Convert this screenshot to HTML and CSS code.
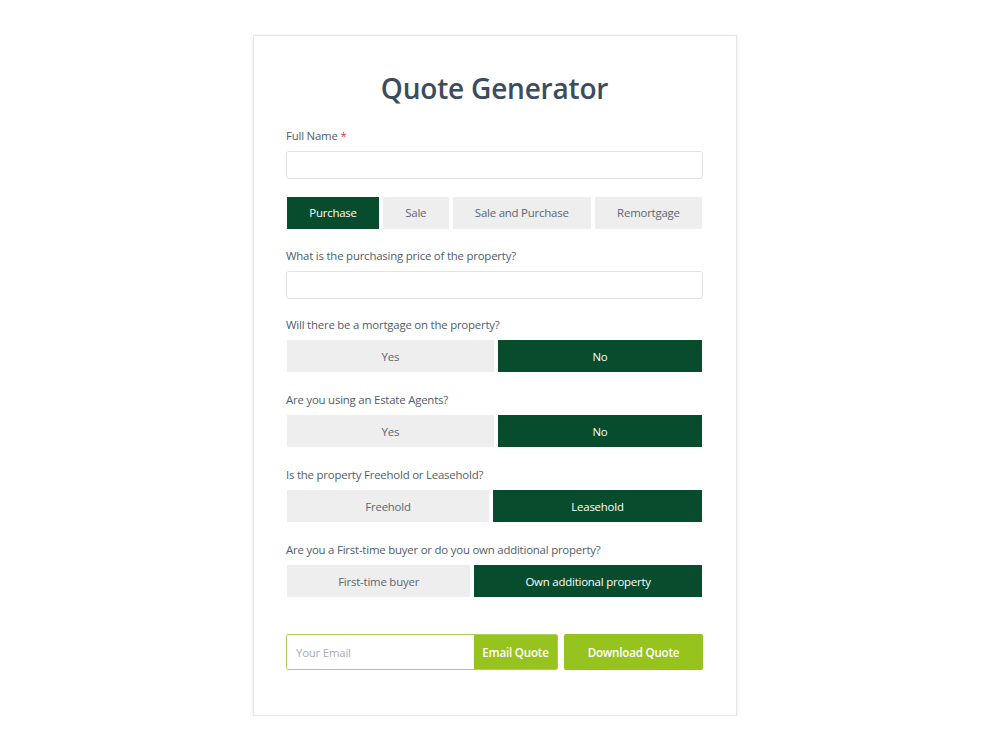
FILE: index.html
```html
<!DOCTYPE html>
<html lang="en">
<head>
<meta charset="utf-8">
<title>Quote Generator</title>
<link rel="stylesheet" href="styles.css">
</head>
<body>
<main class="card">
  <h1 class="title">Quote Generator</h1>

  <div class="field">
    <label class="label">Full Name <span class="req">*</span></label>
    <input class="input" type="text">
  </div>

  <div class="tabs">
    <button class="opt active">Purchase</button>
    <button class="opt">Sale</button>
    <button class="opt">Sale and Purchase</button>
    <button class="opt">Remortgage</button>
  </div>

  <div class="field">
    <label class="label">What is the purchasing price of the property?</label>
    <input class="input" type="text">
  </div>

  <div class="field field-choice">
    <label class="label">Will there be a mortgage on the property?</label>
    <div class="choice">
      <button class="opt">Yes</button>
      <button class="opt active">No</button>
    </div>
  </div>

  <div class="field field-choice">
    <label class="label">Are you using an Estate Agents?</label>
    <div class="choice">
      <button class="opt">Yes</button>
      <button class="opt active">No</button>
    </div>
  </div>

  <div class="field field-choice">
    <label class="label">Is the property Freehold or Leasehold?</label>
    <div class="choice">
      <button class="opt">Freehold</button>
      <button class="opt active">Leasehold</button>
    </div>
  </div>

  <div class="field field-choice">
    <label class="label">Are you a First-time buyer or do you own additional property?</label>
    <div class="choice">
      <button class="opt">First-time buyer</button>
      <button class="opt active">Own additional property</button>
    </div>
  </div>

  <div class="actions">
    <div class="email-group">
      <input class="email" type="email" placeholder="Your Email">
      <button class="email-btn">Email Quote</button>
    </div>
    <button class="download">Download Quote</button>
  </div>
</main>
</body>
</html>
```

FILE: styles.css
```css
* { box-sizing: border-box; }

body {
  margin: 0;
  padding-right: 10px;
  background: #ffffff;
  font-family: "Open Sans", "Noto Sans", sans-serif;
  color: #4f5d6b;
}

.card {
  width: 484px;
  margin: 35px auto 0;
  padding: 33px 33px 45px 32px;
  background: #fff;
  border: 1px solid #e6e6e6;
  box-shadow: 0 1px 4px rgba(0, 0, 0, 0.10);
}

.title {
  margin: 0 0 21px;
  text-align: center;
  font-size: 28px;
  letter-spacing: -0.2px;
  font-weight: 600;
  color: #3c4c5c;
  line-height: 38px;
}

.field { margin-bottom: 18px; }

.field-choice { margin-bottom: 20px; }

.label {
  display: block;
  font-size: 11.4px;
  letter-spacing: -0.2px;
  line-height: 16px;
  margin-bottom: 7px;
  color: #4f5d6b;
}

.req { color: #e53935; }

.input {
  display: block;
  width: 100%;
  height: 28px;
  border: 1px solid #e3e3e3;
  border-radius: 3px;
  background: #fff;
  font: inherit;
}

.tabs,
.choice {
  display: flex;
  gap: 4px;
  padding: 0 1px;
}

.tabs { margin-bottom: 19px; }

.tabs .opt { padding-top: 0; padding-bottom: 1px; }

.opt {
  flex: 1 1 auto;
  height: 32px;
  padding: 0 18px;
  border: none;
  background: #eeeeee;
  color: #5a6672;
  font: inherit;
  font-size: 11.4px;
  letter-spacing: -0.2px;
}

.opt.active {
  background: #064c2d;
  color: #ffffff;
}

.actions {
  display: flex;
  gap: 6px;
  margin-top: 37px;
}

.email-group {
  display: flex;
  width: 272px;
  height: 36px;
  border: 1px solid #a9d154;
  border-radius: 2px;
  overflow: hidden;
}

.email {
  flex: 1;
  min-width: 0;
  border: none;
  padding: 0 9px;
  font: inherit;
  font-size: 11.4px;
  letter-spacing: -0.2px;
  outline: none;
}

.email::placeholder { color: #a7adb3; }

.email-btn,
.download {
  border: none;
  background: #97c31e;
  color: #fff;
  font: inherit;
  font-size: 11.6px;
  letter-spacing: -0.2px;
  font-weight: 600;
}

.email-btn {
  width: 83px;
  padding: 0;
}

.download {
  flex: 1;
  height: 36px;
  border-radius: 2px;
}
```
